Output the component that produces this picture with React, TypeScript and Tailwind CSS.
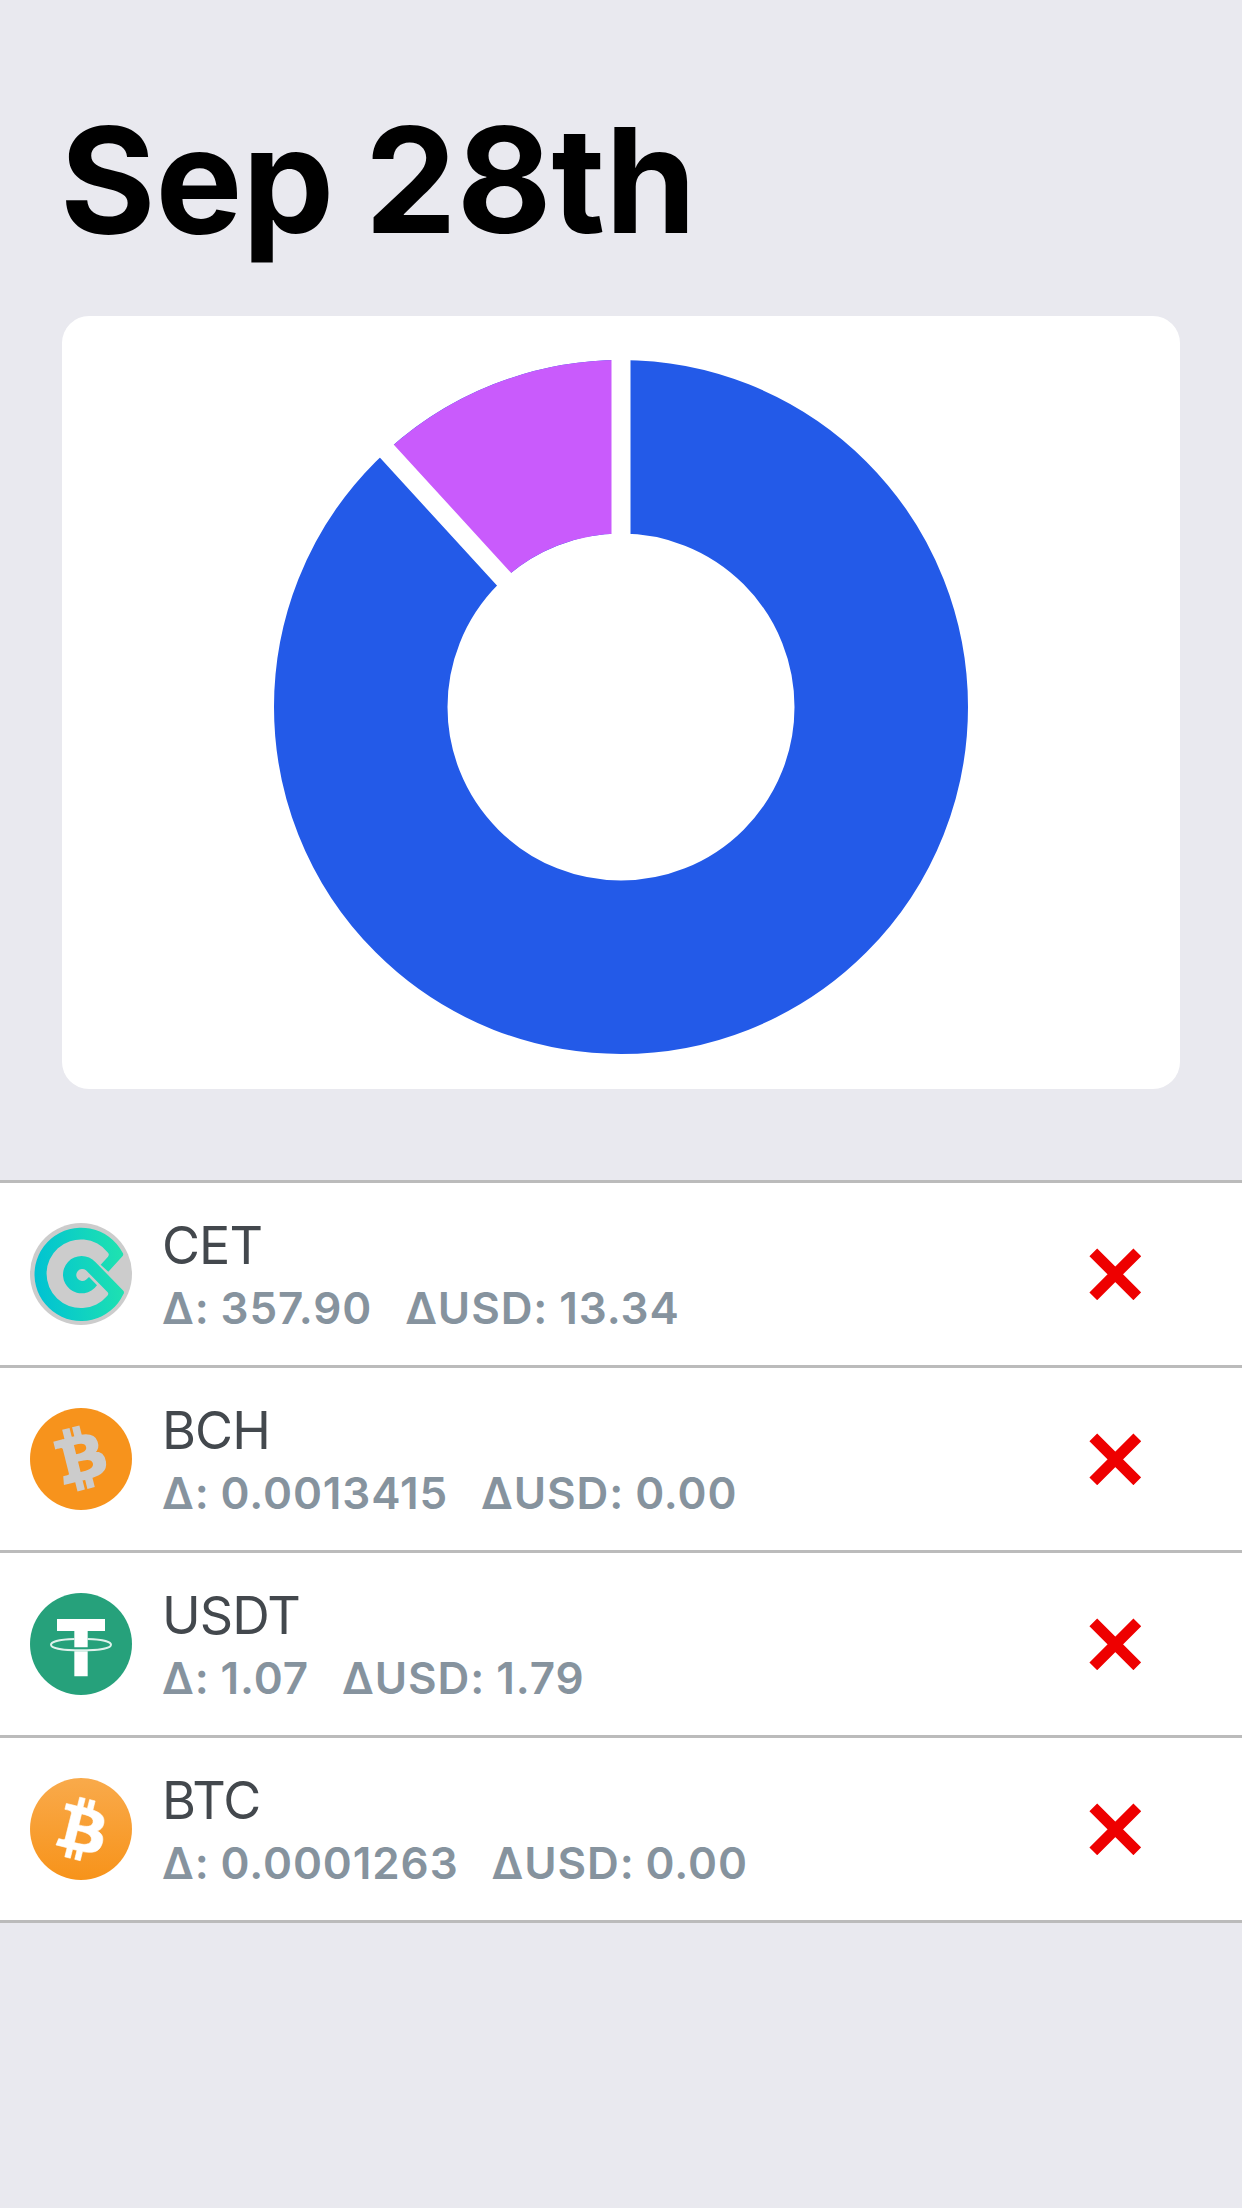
import type { ReactNode } from "react";

const BITCOIN_B =
  "M23.189 14.02c.314-2.096-1.283-3.223-3.465-3.975l.708-2.84-1.728-.43-.69 2.765c-.454-.114-.92-.22-1.385-.326l.695-2.783L15.596 6l-.708 2.839c-.376-.086-.746-.17-1.104-.26l.002-.009-2.384-.595-.46 1.846s1.283.294 1.256.312c.7.175.826.638.805 1.006l-.806 3.235c.048.012.11.03.18.057l-.183-.045-1.13 4.532c-.086.212-.303.531-.793.41.018.025-1.256-.313-1.256-.313l-.858 1.978 2.25.561c.418.105.828.215 1.231.318l-.715 2.872 1.727.43.708-2.84c.472.127.93.245 1.378.357l-.706 2.828 1.728.43.715-2.866c2.948.558 5.164.333 6.097-2.333.752-2.146-.037-3.385-1.588-4.192 1.13-.26 1.98-1.003 2.207-2.538zm-3.95 5.538c-.533 2.147-4.148.986-5.32.695l.95-3.805c1.172.293 4.929.872 4.37 3.11zm.535-5.569c-.487 1.953-3.495.96-4.47.717l.86-3.45c.975.243 4.118.696 3.61 2.733z";

const iconClass = "size-[102px] shrink-0";

function CetIcon() {
  return (
    <svg viewBox="0 0 306 306" className={iconClass}>
      <defs>
        <linearGradient id="cet" gradientUnits="userSpaceOnUse" x1="13" y1="160" x2="282" y2="130">
          <stop offset="0" stopColor="#00c2d3" />
          <stop offset="1" stopColor="#1fe2b0" />
        </linearGradient>
      </defs>
      <circle cx="153" cy="153" r="153" fill="#ccc" />
      <path
        fill="url(#cet)"
        d="M277 88Q282 94 278 99L235 146L212 125L234 101Q239 94 234 89A103 103 0 1 0 232 218Q237 213 233 208L168 142A18 18 0 1 0 168 170L177 162L201 187A56 56 0 1 1 196 117L280 203Q284 208 280 214A140 140 0 1 1 277 88Z"
      />
    </svg>
  );
}

function BchIcon() {
  return (
    <svg viewBox="0 0 32 32" className={iconClass}>
      <circle cx="16" cy="16" r="16" fill="#f7931c" />
      <path
        fill="#ccc"
        stroke="#ccc"
        strokeWidth="0.6"
        d={BITCOIN_B}
        transform="translate(-0.5 -0.3) rotate(-28 16 16)"
      />
    </svg>
  );
}

function UsdtIcon() {
  return (
    <svg viewBox="0 0 306 306" className={iconClass}>
      <circle cx="153" cy="153" r="153" fill="#26a17b" />
      <path fill="#fff" d="M81 78H225V114H173V163H133V114H81ZM133 175H173V250H133Z" />
      <path
        d="M133 138C93 139 63 146 63 155C63 166 103 172 153 172S243 166 243 155C243 146 213 139 173 138"
        fill="none"
        stroke="#fff"
        strokeOpacity="0.85"
        strokeWidth="6"
      />
    </svg>
  );
}

function BtcIcon() {
  return (
    <svg viewBox="0 0 32 32" className={iconClass}>
      <defs>
        <linearGradient id="btc" x1="0" y1="0" x2="0" y2="1">
          <stop offset="0" stopColor="#f9aa4b" />
          <stop offset="1" stopColor="#f7931a" />
        </linearGradient>
      </defs>
      <circle cx="16" cy="16" r="16" fill="url(#btc)" />
      <path fill="#fff" stroke="#fff" strokeWidth="0.2" d={BITCOIN_B} />
    </svg>
  );
}

type Row = { name: string; delta: string; usd: string; icon: ReactNode };

const rows: Row[] = [
  { name: "CET", delta: "357.90", usd: "13.34", icon: <CetIcon /> },
  { name: "BCH", delta: "0.0013415", usd: "0.00", icon: <BchIcon /> },
  { name: "USDT", delta: "1.07", usd: "1.79", icon: <UsdtIcon /> },
  { name: "BTC", delta: "0.0001263", usd: "0.00", icon: <BtcIcon /> },
];

function Donut() {
  return (
    <svg viewBox="0 0 694 694" className="size-[694px]">
      <circle cx="347" cy="347" r="260.25" fill="none" stroke="#235ae8" strokeWidth="173.5" />
      <path d="M347 86.75A260.25 260.25 0 0 0 171.3 155" fill="none" stroke="#c95bfc" strokeWidth="173.5" />
      <path d="M347 347V-10M347 347L103 80.4" fill="none" stroke="#fff" strokeWidth="19" />
    </svg>
  );
}

export default function App() {
  return (
    <div className="min-h-[2208px] w-[1242px] bg-[#e9e9ef] pt-[100px] font-['Inter',sans-serif]">
      <h1 className="ml-[60px] h-[216px] text-[146px] leading-[160px] font-bold tracking-[-0.1px] whitespace-nowrap text-black [word-spacing:-4px]">
        Sep 28th
      </h1>
      <section className="mx-[62px] flex h-[773px] justify-center rounded-[27px] bg-white pt-[44px]">
        <Donut />
      </section>
      <ul className="mt-[91px] border-t-[3px] border-[#bbb]">
        {rows.map((row) => (
          <li
            key={row.name}
            className="flex h-[185px] items-center border-b-[3px] border-[#bbb] bg-white pr-[101px] pl-[30px]"
          >
            {row.icon}
            <div className="ml-[31px] flex-1 pt-1 whitespace-pre">
              <div className="-ml-px text-[52px] leading-[63px] tracking-[-0.9px] text-[#43484d]">{row.name}</div>
              <div className="-ml-px text-[44px] leading-[62px] font-semibold tracking-[0.9px] text-[#86939e] [word-spacing:-1px]">
                {`Δ: ${row.delta}   ΔUSD: ${row.usd}`}
              </div>
            </div>
            <svg viewBox="0 0 52 52" className="size-[52px]">
              <path d="M4.300 4.300L48.300 48.300M48.300 4.300L4.300 48.300" stroke="#ee0000" strokeWidth="11" />
            </svg>
          </li>
        ))}
      </ul>
    </div>
  );
}
